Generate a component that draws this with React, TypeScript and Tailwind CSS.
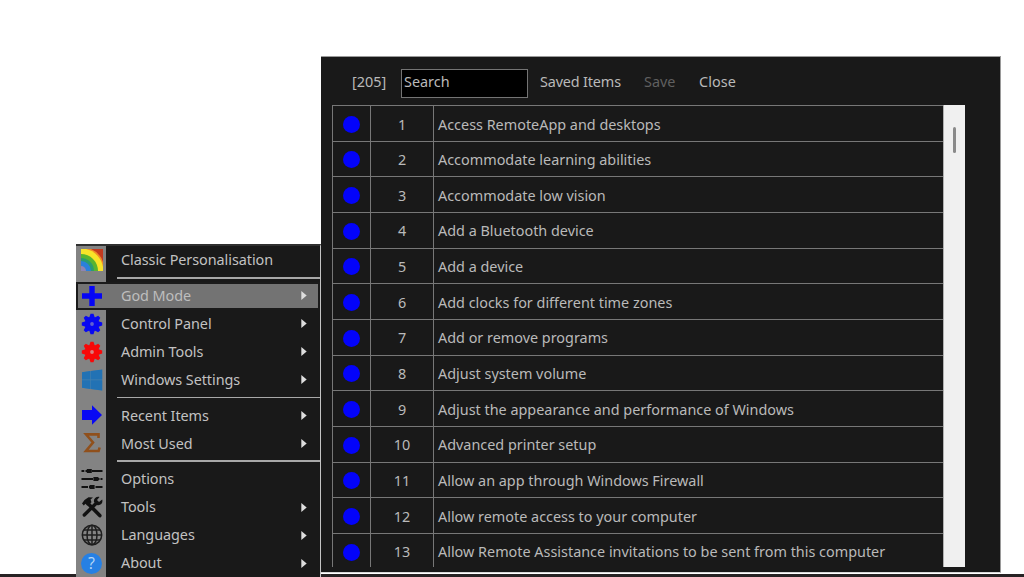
import React from 'react';

type MenuEntry = {
  label: string;
  icon: React.ReactNode;
  submenu?: boolean;
  active?: boolean;
};

const GearIcon = ({ className, hole }: { className: string; hole: string }) => (
  <svg viewBox="0 0 22 22" className={`h-[22px] w-[22px] ${className}`} fill="currentColor">
    {[0, 45, 90, 135, 180, 225, 270, 315].map((angle) => (
      <path key={angle} d="M7.8 6L9.5 0.8H12.5L14.2 6Z" transform={`rotate(${angle} 11 11)`} />
    ))}
    <circle cx="11" cy="11" r="7" />
    <circle cx="11" cy="11" r="1.9" className={hole} />
  </svg>
);

const RainbowIcon = () => (
  <svg viewBox="0 0 22 22" className="h-[22px] w-[22px]">
    <rect width="22" height="22" fill="#c23a20" />
    <path d="M0 0H10A21 21 0 0 1 22 13V22H0Z" fill="#f08a28" />
    <path d="M0 0H5A22 22 0 0 1 22 18V22H0Z" fill="#f8e428" />
    <path d="M0 5A17 17 0 0 1 17 22H0Z" fill="#58b430" />
    <path d="M0 9A13 13 0 0 1 13 22H0Z" fill="#2a9c70" />
    <path d="M0 12A10 10 0 0 1 10 22H0Z" fill="#2a80dc" />
    <path d="M0 17A5 5 0 0 1 5 22H0Z" fill="#8f84b4" />
  </svg>
);

const PlusIcon = () => (
  <svg viewBox="0 0 22 22" className="h-[22px] w-[22px]" fill="#0505f5">
    <path d="M8.3 1H13.7V8.3H21V13.7H13.7V21H8.3V13.7H1V8.3H8.3Z" />
  </svg>
);

const WindowsIcon = () => (
  <svg viewBox="0 0 22 22" className="h-[22px] w-[22px]" fill="#2272b4">
    <path d="M1 3.2L21.2 0.8V21.4L1 18.8Z" fill="#4680ac" />
    <path d="M1 3.2L9.2 2.1V10.6H1ZM9.8 2L21.2 0.6V10.6H9.8ZM1 11.2H9.2V19.9L1 18.8ZM9.8 11.2H21.2V21.4L9.8 20Z" />
  </svg>
);

const ArrowIcon = () => (
  <svg viewBox="0 0 22 22" className="h-[22px] w-[22px]" fill="#0808f4">
    <path d="M1 6H11V1.2L21 11L11 20.8V16H1Z" />
  </svg>
);

const SigmaIcon = () => (
  <svg viewBox="0 0 22 22" className="h-[22px] w-[22px]" fill="none" stroke="#90501c" strokeWidth="2.6">
    <path d="M17.5 6V2.4H5L12 10.5L5 19H17.6L18.6 15.5" />
  </svg>
);

const SlidersIcon = () => (
  <svg viewBox="0 0 22 22" className="h-[22px] w-[22px]" fill="#111" stroke="#111" strokeWidth="2">
    <path d="M0.5 3H3.3M4.5 3H9M11 3H21.5M0.5 11H12M14 11H18.5M19.5 11H21.5M0.5 19H7M8 19H13M14.5 19H21.5" />
    <path d="M6.8 2H9.8V4H6.8ZM13.4 10H16.4V12H13.4ZM9.6 18H12.6V20H9.6Z" />
  </svg>
);

const ToolsIcon = () => (
  <svg viewBox="0 0 22 22" className="h-[22px] w-[22px]">
    <path d="M8 8.5L18.8 19.6" fill="none" stroke="#121212" strokeWidth="3.6" strokeLinecap="round" />
    <path d="M1 7.5L3.5 4L7.5 1.2L12 1.6L9.5 3.5L10.5 6.3L6.3 9.8L4.4 7.7L2.8 9.4Z" fill="#121212" />
    <path d="M3.3 19L15.5 7" fill="none" stroke="#121212" strokeWidth="3.4" strokeLinecap="round" />
    <path d="M18.5 1L16 4L18 6L21.2 3.5C22.3 7 19.5 10 16 9L13 6C12.3 2.8 15.3 0.2 18.5 1Z" fill="#121212" />
  </svg>
);

const GlobeIcon = () => (
  <svg viewBox="0 0 22 22" className="h-[22px] w-[22px]" fill="none" stroke="#1e1e1e" strokeWidth="1.5">
    <circle cx="11" cy="11" r="9.7" />
    <ellipse cx="11" cy="11" rx="5" ry="9.7" />
    <path d="M11 1.3V20.7M1.3 11H20.7M2.8 6H19.2M2.8 16H19.2" />
  </svg>
);

const HelpIcon = () => (
  <span className="flex h-[21px] w-[21px] items-center justify-center rounded-full bg-[#2680e4] font-['Open_Sans',sans-serif] text-[16px] leading-none text-[#b9d8f6]">
    ?
  </span>
);

const menuGroups: MenuEntry[][] = [
  [{ label: 'Classic Personalisation', icon: <RainbowIcon /> }],
  [
    { label: 'God Mode', icon: <PlusIcon />, submenu: true, active: true },
    { label: 'Control Panel', icon: <GearIcon className="text-[#0808f2]" hole="fill-[#6262d0]" />, submenu: true },
    { label: 'Admin Tools', icon: <GearIcon className="text-[#f80808]" hole="fill-[#d88080]" />, submenu: true },
    { label: 'Windows Settings', icon: <WindowsIcon />, submenu: true },
  ],
  [
    { label: 'Recent Items', icon: <ArrowIcon />, submenu: true },
    { label: 'Most Used', icon: <SigmaIcon />, submenu: true },
  ],
  [
    { label: 'Options', icon: <SlidersIcon /> },
    { label: 'Tools', icon: <ToolsIcon />, submenu: true },
    { label: 'Languages', icon: <GlobeIcon />, submenu: true },
    { label: 'About', icon: <HelpIcon />, submenu: true },
  ],
];

const items = [
  'Access RemoteApp and desktops',
  'Accommodate learning abilities',
  'Accommodate low vision',
  'Add a Bluetooth device',
  'Add a device',
  'Add clocks for different time zones',
  'Add or remove programs',
  'Adjust system volume',
  'Adjust the appearance and performance of Windows',
  'Advanced printer setup',
  'Allow an app through Windows Firewall',
  'Allow remote access to your computer',
  'Allow Remote Assistance invitations to be sent from this computer',
];

const MenuRow = ({ label, icon, submenu, active }: MenuEntry) => (
  <div
    className={`flex h-7 items-center border-2 ${
      active ? 'border-[#1b1b1b] bg-[#737373] text-[#bebebe]' : 'border-transparent'
    }`}
  >
    <div className="flex w-[27px] shrink-0 items-center justify-center">{icon}</div>
    <span className="ml-4 flex-1 whitespace-nowrap">{label}</span>
    {submenu && (
      <svg viewBox="0 0 6 10" className="mr-[11px] h-[9px] w-[6px]" fill="#dedede">
        <path d="M0 0L6 5L0 10Z" />
      </svg>
    )}
  </div>
);

const ContextMenu = () => (
  <div className="z-10 mt-[244px] flex w-[245px] shrink-0 flex-col border-t-2 border-r border-t-[#303030] border-r-[#c4c4c4] bg-[linear-gradient(to_right,#838383_30px,#191919_30px)] text-[14.4px] tracking-[-0.05px] text-[#c2c2c2]">
    {menuGroups.map((group, index) => (
      <div key={index}>
        {index > 0 && (
          <div className="flex h-[7.7px] items-center pl-[41px]">
            <div className="h-[1.5px] w-full bg-[#a8a8a8]" />
          </div>
        )}
        {group.map((entry) => (
          <MenuRow key={entry.label} {...entry} />
        ))}
      </div>
    ))}
  </div>
);

const ItemsWindow = () => (
  <div className="z-10 mt-[56px] flex h-[517px] w-[680px] shrink-0 flex-col border-t border-r border-b border-[#9a9a9a] border-b-[#d8d8d8] bg-[#191919] text-[14.4px] text-[#bababa]">
    <div className="flex h-[48px] shrink-0 items-center pt-[1px]">
      <span className="ml-[31px] w-[49px]">[205]</span>
      <input
        defaultValue="Search"
        className="mt-1 h-[29px] w-[127px] border border-[#747474] bg-black px-[2px] pb-[4px] outline-none"
      />
      <span className="ml-[12px] w-[104px] tracking-[-0.15px]">Saved Items</span>
      <span className="w-[55px] text-[#606060]">Save</span>
      <span className="tracking-[0.1px]">Close</span>
    </div>
    <div className="ml-[11px] flex h-[462px] w-[633px] overflow-hidden">
      <div className="w-[611px] shrink-0 border-l border-[#777]">
        {items.map((item, index) => (
          <div key={item} className="flex h-[35.67px] border-t border-[#777]">
            <div className="flex w-[38px] shrink-0 items-center justify-center border-r border-[#777] pt-[2px]">
              <span className="h-[17px] w-[17px] rounded-full bg-[#0303fa]" />
            </div>
            <div className="flex w-[63px] shrink-0 items-center justify-center border-r border-[#777] pt-[2px]">
              {index + 1}
            </div>
            <div className="flex flex-1 items-center pt-[2px] pl-[4px] whitespace-nowrap">{item}</div>
          </div>
        ))}
      </div>
      <div className="flex w-[22px] justify-center border-l border-[#b0b0b0] bg-[#f0f0f0] pt-[22px]">
        <div className="h-[26px] w-[3px] rounded-sm bg-[#8a8a8a]" />
      </div>
    </div>
  </div>
);

export default function App() {
  return (
    <div className="relative flex h-[577px] w-[1024px] overflow-hidden bg-white pl-[76px] font-['Noto_Sans',sans-serif]">
      <div className="absolute inset-x-0 bottom-0 h-[3px] bg-[#272324]" />
      <ContextMenu />
      <ItemsWindow />
    </div>
  );
}
